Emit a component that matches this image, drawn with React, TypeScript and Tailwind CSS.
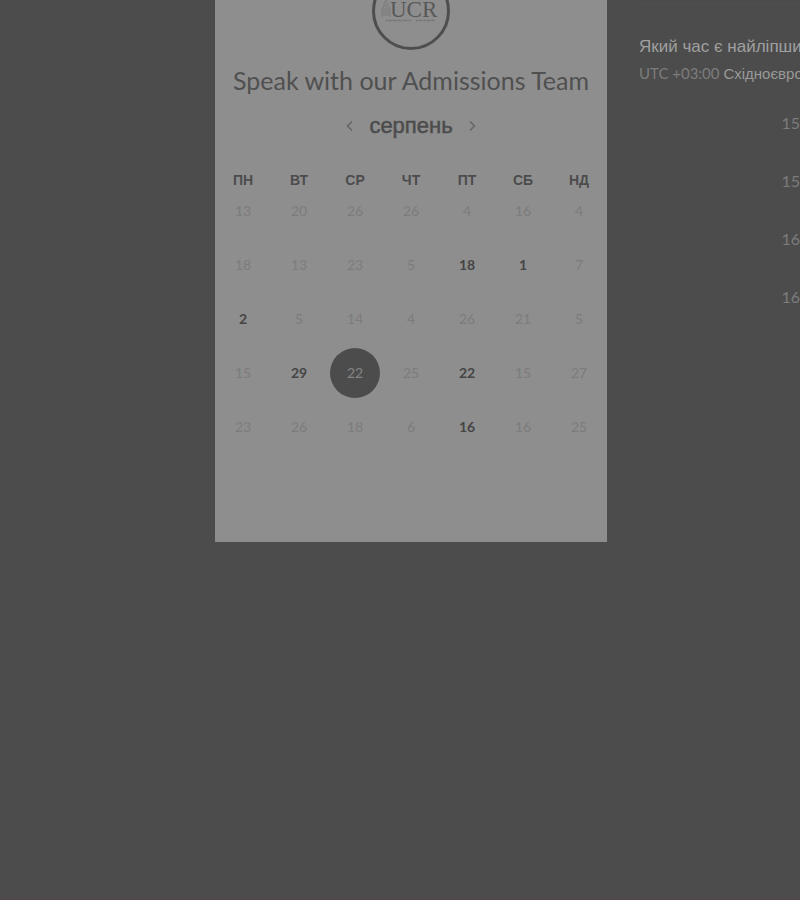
import React from "react";

const weekdays = ["ПН", "ВТ", "СР", "ЧТ", "ПТ", "СБ", "НД"];

const weeks = [
  ["13", "20", "26", "26", "4", "16", "4"],
  ["18", "13", "23", "5", "18", "1", "7"],
  ["2", "5", "14", "4", "26", "21", "5"],
  ["15", "29", "22", "25", "22", "15", "27"],
  ["23", "26", "18", "6", "16", "16", "25"],
];

const open = ["1-4", "1-5", "2-0", "3-1", "3-4", "4-4"];
const selected = "3-2";

const times = ["15", "15", "16", "16"];

function Logo() {
  return (
    <svg className="mx-auto block h-[50px] w-[78px]" viewBox="0 0 78 50" role="img" aria-label="UCR">
      <circle cx="39" cy="11" r="37.5" fill="none" stroke="#4e4e4e" strokeWidth="3" />
      <path
        d="M10 17V8l2-1V4l2-4 2 4v3l2 1v9M12 8v8M14 4v12M16 8v8"
        fill="none"
        stroke="#7b7b7b"
        strokeWidth="1"
      />
      <text x="18" y="17" fill="#585858" fontFamily="'Liberation Serif', serif" fontSize="23">
        UCR
      </text>
      <path d="M14 20.5H39M44 20.5H63" stroke="#757575" strokeWidth="1.5" strokeDasharray="2 .7 3 .6 1 .6" />
    </svg>
  );
}

function Chevron({ path }: { path: string }) {
  return (
    <svg className="h-3 w-2" viewBox="0 0 8 12" fill="none" stroke="#666666" strokeWidth="1.6" aria-hidden="true">
      <path d={path} />
    </svg>
  );
}

function Day({ id, day }: { id: string; day: string }) {
  if (id === selected) {
    return (
      <button
        type="button"
        aria-pressed="true"
        className="mx-auto flex size-[50px] items-center justify-center rounded-full bg-[#4c4c4c] text-[#858585]"
      >
        {day}
      </button>
    );
  }
  if (open.includes(id)) {
    return (
      <button type="button" className="h-[50px] w-full font-bold text-[#454545]">
        {day}
      </button>
    );
  }
  return (
    <button type="button" disabled className="h-[50px] w-full text-[#7c7c7c]">
      {day}
    </button>
  );
}

export default function App() {
  return (
    <div className="flex min-h-screen flex-col overflow-hidden border-b-2 border-[#51474c] bg-[#4c4c4c] font-['Lato','Liberation_Sans',sans-serif]">
      <div className="grid grid-cols-[minmax(0,215fr)_minmax(0,392fr)_minmax(0,193fr)]">
        <main className="col-start-2 bg-[#8e8e8e] pb-[88px]">
          <Logo />
          <h1 className="mt-3 text-center text-[25px] leading-9 whitespace-nowrap text-[#505050]">
            Speak with our Admissions Team
          </h1>
          <div className="mt-3 flex h-8 items-center justify-center gap-4">
            <button type="button" aria-label="Previous month">
              <Chevron path="M7 1.500 2.500 6 7 10.500" />
            </button>
            <h2 className="font-['Liberation_Sans',sans-serif] text-[22px] leading-8 font-medium text-[#4c4c4c] [-webkit-text-stroke:0.5px_#4c4c4c]">
              серпень
            </h2>
            <button type="button" aria-label="Next month">
              <Chevron path="M1 1.500 5.500 6 1 10.500" />
            </button>
          </div>
          <table className="mt-[34px] w-full table-fixed border-collapse">
            <thead>
              <tr className="font-['Liberation_Sans',sans-serif] text-sm font-bold text-[#4c4c4c]">
                {weekdays.map((name) => (
                  <th key={name} scope="col" className="p-0 leading-2">
                    {name}
                  </th>
                ))}
              </tr>
            </thead>
            <tbody className="text-sm">
              {weeks.map((week, row) => (
                <tr key={row} className="h-[54px]">
                  {week.map((day, col) => (
                    <td key={col} className="p-0 text-center">
                      <Day id={`${row}-${col}`} day={day} />
                    </td>
                  ))}
                </tr>
              ))}
            </tbody>
          </table>
        </main>
        <aside className="ml-8 overflow-hidden whitespace-nowrap">
          <div className="border-b border-[#505050] pt-1" />
          <h2 className="mt-8 font-['Liberation_Sans',sans-serif] text-[17px] leading-5 text-[#a0a0a0]">
            Який час є найліпши
          </h2>
          <p className="mt-1 text-[15px] leading-6 text-[#7c7c7c]">
            UTC +03:00{" "}
            <span className="font-['Liberation_Sans',sans-serif] text-[#999999]">Східноєвро</span>
          </p>
          <ul className="mt-3">
            {times.map((time, i) => (
              <li key={i} className="h-[58px]">
                <button type="button" className="h-[50px] w-full text-right text-base text-[#7c7c7c]">
                  {time}
                </button>
              </li>
            ))}
          </ul>
        </aside>
      </div>
    </div>
  );
}
